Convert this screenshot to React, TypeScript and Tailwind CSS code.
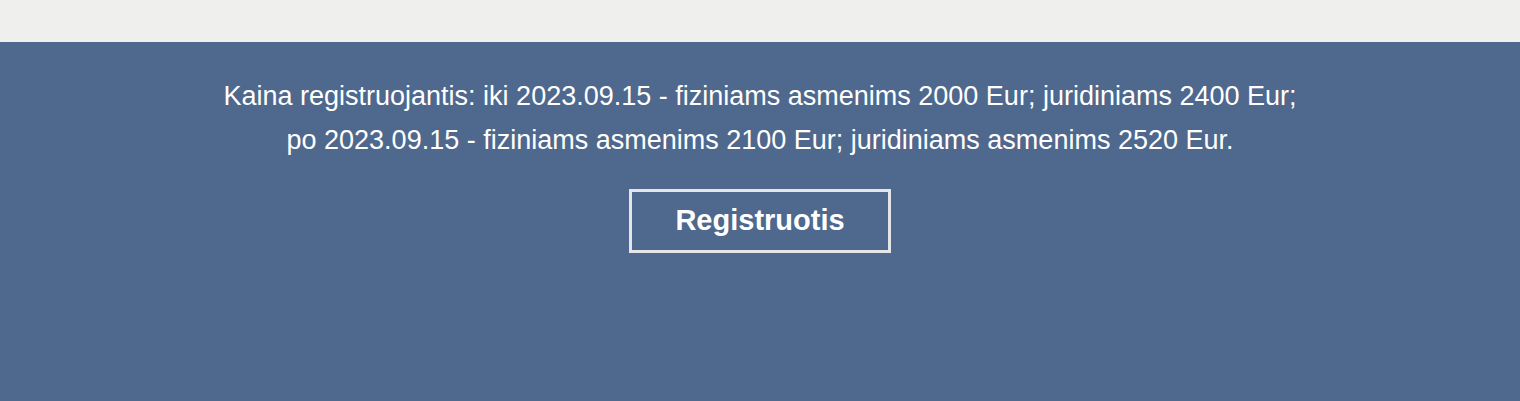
export default function App() {
  return (
    <div className="min-h-screen flex flex-col bg-[#4f688d] font-['Liberation_Sans',Arial,sans-serif]">
      <div className="h-[42px] bg-[#efefee]" />
      <section className="flex flex-col items-center pt-[32px] text-white">
        <p className="text-center text-[27px] leading-[44px]">
          Kaina registruojantis: iki 2023.09.15 - fiziniams asmenims 2000 Eur; juridiniams 2400 Eur;
          <br />
          po 2023.09.15 - fiziniams asmenims 2100 Eur; juridiniams asmenims 2520 Eur.
        </p>
        <button
          type="button"
          className="mt-[27px] w-[262px] h-[64px] border-[3px] border-[#e4e6ea] text-[29px] font-bold text-white"
        >
          Registruotis
        </button>
      </section>
    </div>
  );
}
